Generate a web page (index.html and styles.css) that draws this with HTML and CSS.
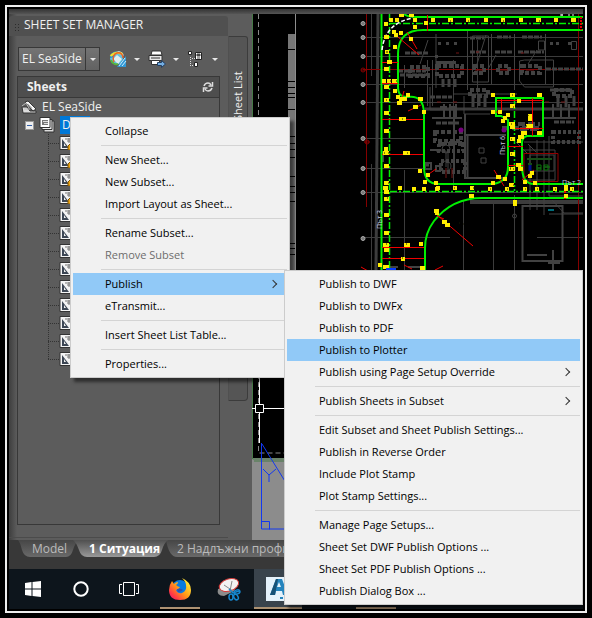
FILE: index.html
```html
<!DOCTYPE html>
<html lang="en">
<head>
<meta charset="utf-8">
<title>Sheet Set Manager</title>
<link rel="stylesheet" href="styles.css">
</head>
<body>
<svg class="defs" aria-hidden="true">
  <symbol id="sheet" viewBox="0 0 16 14">
    <path d="M1 .5h15v13H1z" fill="#f4f4f4" stroke="#333"/>
    <path d="M3 3l7 9H3z" fill="#3c4654"/><path d="M5 7l2 3H5z" fill="#f4f4f4"/>
    <path d="M6 3h10M10 2v5M8 5h8" stroke="#777" fill="none"/>
  </symbol>
  <symbol id="sheet-locked" viewBox="0 0 16 14">
    <use href="#sheet"/><path d="M9 14v-4l2-2h5v6z" fill="#f0a818" stroke="#7d5200"/>
  </symbol>
</svg>
<div class="frame">
  <main class="workspace">
    <section class="palette">
      <h1 class="palette-title">SHEET SET MANAGER</h1>
      <div class="palette-body">
        <div class="palette-main">
          <div class="toolbar">
            <button class="combo" type="button"><span class="combo-text">EL SeaSide</span><span class="combo-arrow"><i class="caret"></i></span></button>
            <button class="tool" type="button" aria-label="Publish to DWF">
              <svg width="18" height="18" viewBox="0 0 18 18"><circle cx="7.500" cy="8" r="6.500" fill="#5fbfe2"/><path d="M1 8q0-5 5-6.500L5 7z" fill="#1d8ed0"/><path d="M4 9l4-4 5 4-4 5z" fill="#dfeef0"/><path d="M8 1q6 0 7 5l-3-2z" fill="#bfe0ea"/><path d="M1.500 6q5-5 12-2" fill="none" stroke="#f0dc2c" stroke-width="2"/><path d="M5 12c-2-5 0-8 3-9 4-1 6 2 6 5" fill="none" stroke="#e96428" stroke-width="1.500"/><path d="M2 10c1 3 4 5 7 4" fill="none" stroke="#58b43c" stroke-width="2"/><path d="M17 6v11H8z" fill="#3197d4"/><path d="M16 8l-6 8M17 11l-4 5" stroke="#c9edff"/></svg><i class="caret"></i>
            </button>
            <button class="tool" type="button" aria-label="Publish">
              <svg width="18" height="18" viewBox="0 0 18 18"><path d="M4 1h9l1 4H3z" fill="#fff" stroke="#333"/><path d="M1 5.500h13v5H1z" fill="#e8e8e8" stroke="#333"/><path d="M3 8h9" stroke="#333"/><path d="M3.500 10.500h8v4h-8z" fill="#fff" stroke="#333"/><path d="M9.500 12.500h4v-2l4 3.500-4 3.500v-2h-4z" fill="#74aee2" stroke="#243f61"/></svg><i class="caret"></i>
            </button>
            <button class="tool" type="button" aria-label="Sheet selections">
              <svg width="18" height="18" viewBox="0 0 18 18"><path d="M1.500 1.500h3v3h-3zM8.500 2.500h6v7h-6zM7.500 12.500h3v4h-3z" fill="#fff" stroke="#222"/><path d="M10 4h3v2h-3zM10 8h3" fill="#444" stroke="#444"/><path d="M3.500 7v10M5 15.500h2M5 8.500h3" fill="none" stroke="#ddd" stroke-dasharray="1 1"/></svg><i class="caret"></i>
            </button>
          </div>
          <div class="tree-box">
            <h2 class="tree-head">Sheets
              <svg width="12" height="12" viewBox="0 0 12 12" fill="none" stroke="#ddd" stroke-width="1.500"><path d="M2 5q1-3 4-3 2 0 3 2M10.500 1v4h-4M10 7q-1 3-4 3-2 0-3-2M1.500 11V7h4"/></svg>
            </h2>
            <div class="tree-row root">
              <svg width="17" height="14" viewBox="0 0 17 14"><path d="M1 7h5l3 4h6v2H2z" fill="#ddd" stroke="#333"/><path d="M4 2l3-1 8 8-3 2z" fill="#f4f4f4" stroke="#333"/><path d="M1 6l4-3 3 5M3 9h6M7 4l4 4" fill="none" stroke="#bbb"/></svg>EL SeaSide
            </div>
            <div class="tree-row subset">
              <button class="expander" type="button" aria-label="Collapse"></button>
              <svg width="16" height="16" viewBox="0 0 16 16"><path d="M5 4h10v11H5z" fill="#ddd" stroke="#333"/><path d="M3 2.500h10v10H3z" fill="#eee" stroke="#333"/><path d="M1 .5h10v10H1z" fill="#fff" stroke="#333"/><path d="M3 3h6v5H3z" fill="#777"/><path d="M4 4.500h5M5 6.500h4" stroke="#ddd"/></svg>
              <span class="selected">D</span>
            </div>
            <ul class="sheets">
              <li><svg><use href="#sheet-locked"/></svg></li><li><svg><use href="#sheet-locked"/></svg></li><li><svg><use href="#sheet-locked"/></svg></li><li><svg><use href="#sheet-locked"/></svg></li>
              <li><svg><use href="#sheet"/></svg></li><li><svg><use href="#sheet"/></svg></li><li><svg><use href="#sheet"/></svg></li><li><svg><use href="#sheet"/></svg></li><li><svg><use href="#sheet"/></svg></li><li><svg><use href="#sheet"/></svg></li><li><svg><use href="#sheet"/></svg></li><li><svg><use href="#sheet"/></svg></li><li><svg><use href="#sheet"/></svg></li>
            </ul>
          </div>
        </div>
        <div class="side-tabs"><button class="side-tab" type="button">Sheet List</button></div>
      </div>
    </section>
    <div class="drawing">
      <svg class="cad" viewBox="252 14 331 526" preserveAspectRatio="xMinYMin slice" fill="none">
        <path d="M253 14h330v444H253z" fill="#000"/>
        <path d="M252.500 14v445H583M254 461h329" stroke="#477a47"/>
        <path d="M258.500 14v439H583" stroke="#888" stroke-dasharray="5 3"/>
        <path d="M259.500 378v65M252 408.500h32" stroke="#fff"/>
        <path d="M255.500 404.500h8v8h-8z" fill="#000" stroke="#fff"/>
        <g stroke="#1238f0"><path d="M261.500 443v86H300M261.500 521.500h8v8M262 444l34 55M263 469l6 6v7M269 475l7-6"/></g>
        <path d="M288 34h7v240h-7z" fill="#777"/>
        <path d="M295.500 14v260" stroke="#8e8e8e"/><path d="M289.500 125v150" stroke="#444"/>
        <path d="M288 49.500h7m-7 32h7m-7 6h7m-7 6h7m-7 4h7m-7 12h7m-7 27h7m-7 7h7m-7 6h7m-7 8h7m-7 19h7m-7 10h7m-7 6h7m-7 9h7m-7 42h7m-7 5h7m-7 6h7" stroke="#000"/>

        <!-- grid axes -->
        <g stroke="#3c3c3c">
          <path d="M363 37.500h220M363 56.500h220M363 84.500h220M363 102.500h220M363 138.500h60M363 168.500h60M363 192.500h220M363 237.500h87M537 237.500h46M371.500 14v62M371.500 164v106M404.500 170v100M463.500 200v70M493.500 200v70M453.500 60v130M477.500 40v70M514.500 195v75"/>
          <path d="M378 14l-2 256" stroke-width="3"/>
          <path d="M425 109h158" stroke-width="3"/><path d="M470 202h113" stroke-width="4"/>
        </g>
        <g fill="#777" stroke="#aaa"><circle cx="363" cy="23.500" r="2"/><circle cx="363" cy="37.500" r="2"/><circle cx="363" cy="56.500" r="2"/><circle cx="363" cy="84.500" r="2"/><circle cx="363" cy="102.500" r="2"/><circle cx="363" cy="138.500" r="2"/><circle cx="363" cy="168.500" r="2"/><circle cx="363" cy="192.500" r="2"/><circle cx="363" cy="238.500" r="2"/></g>
        <g stroke="#850000"><path d="M366.500 14v193M363 69.500h220M578.500 14v256M361 70h6M364 142h6"/><circle cx="363" cy="70" r="2"/><circle cx="367" cy="142" r="2"/></g>

        <!-- building plans -->
        <g stroke="#424242">
          <path d="M436 34v54M467.500 30v60M491.500 34v50M514.500 34v56M545.500 34v50M427.500 60v46M432.500 60v46M404.500 65v23M472.500 36v46h16V36zM571.500 41.500h5v8h-5zM519.500 61v20l5 6h29V60h-29zM538.500 41h6v9h-6zM496 55l-8 14M428 40l-8 24M486 35l-9 29M537 50l-9 14M430 87v23h25M453 94h64M464 96v18h26"/>
          <path d="M398 71h28M400 75h26M405 53h24M470 38h14M497 37h14M522 37h20M470 52h16M495 52h18M518 52h26M546 69h37M430 97h22M550 90h22M436 123h24M554 122h20M424 165h8" stroke-width="3" stroke-dasharray="5 1"/>
          <path d="M437 66h25v10h-25zM474 66h10v7h-10zM498 66h11v7h-11zM522 66h18v7h-18zM470 90h18v6h-18zM554 90h18v6h-18zM410 67h18v9h-18zM435 132h26v9h-26z" stroke-width="4" stroke-dasharray="4 2"/>
          <path d="M438 43.500h3m5 0h3m5 0h3m93 0h3m3 0h3m9 0h3m-136 13h3M436 62.500h20M443 79v8m6-8v8m6-8v8m18 9v11m6-11v10m6-10v11m73-11v11m8-11v11m8-11v10" stroke-width="3"/>
          <path d="M444 104v14m6-14v14m6-14v14m97-14v14m8-14v14m8-14v14m-137 0h30m80 0h34M454 110v60M465 114v64h38M468 178h34M466 135h40M467.500 135v43" stroke-width="2"/>
          <path d="M439 143h24v8h-24zM441 161h24v11h-24zM553 132h26v10h-26z" stroke-width="4" stroke-dasharray="3 2"/>
          <path d="M479 148h5v5h-5zM481 158h5v5h-5zM523 150h32v30h-32zM530 146v64M537 140v70M544 140v75M549 136v60h34M549 214h34M524 142h59M530 155h24v16h-24zM528 144l8 8M516 142l12 12M552 200l12 13h20M436 151h10v16M448 152v20" />
          <path d="M522.500 206v55h40v-55zM527 255h20M553 250v20M548 263h12" stroke-width="2"/>
          <path d="M438 144h26M440 108h16M502 128h40M518 124h22M520 129h20" stroke-width="4" stroke-dasharray="7 3"/>
          <path d="M425 163h6v6h-6zM436 166h4v5h-4zM430 150h10M383 151v11M408 267h12M384 267h14" stroke-width="2"/>
          <circle cx="514.500" cy="216" r="2"/><circle cx="446" cy="166" r="5"/><circle cx="446" cy="149" r="4"/>
        </g>
        <path d="M437 102h4m12 0h4m88 0h4m12 0h4M446 168v10m6-10v10m4-125h3m17-1h3m42 1h3M475 70h8m17 0h8m18 0h8" stroke="#751414"/>
        <path d="M524 153.500h34v28h-34z" stroke="#910000"/><path d="M527 159h25M528 164h4m5 4h4m3-1h6" stroke="#174c17" stroke-width="2"/><path d="M537 165h4v5h-4zM544 165h4v5h-4z" stroke="#087808"/><path d="M530 165v6" stroke="#001088" stroke-width="3"/>
        <circle cx="461" cy="130" r="2.500" fill="#75007d"/><circle cx="504" cy="130" r="2.500" fill="#75007d"/><path d="M548 210h6" stroke="#006b78" stroke-width="2"/>

        <!-- roads -->
        <g stroke="#00f000" stroke-width="2">
          <path d="M381.500 14v256M404 14q4 3 12 3H583M583 30H423q-25 0-25 24v33q0 11 10 10 16-2 16 17v53q0 17 15 17h54q15-2 15-17v-47l-7-4h-5V98h47v38h-16q-5 1-5 7v23q0 18 12 18h49M583 198H482q-30 0-48 23-9 12-9 27v22"/>
          <path d="M389.500 14v256M390 23.500h193M390 191.500h193M514.500 98v93" stroke-width="1.500" stroke-dasharray="7 2 2 2"/>
        </g>
        <path d="M382 50q3-27 31-32" stroke="#fff" stroke-width="1.500" stroke-dasharray="4 2"/>
        <g stroke="#f00000"><path d="M382 62.500h16M382 83.500h16M382 119.500h41M382 154.500h41M382 247.500h42M382 258.500h42M427.500 15v16M398 37l21 18M407 32l10 17M408 111l13-6M404 91l-2 7M437 215l36 31M494 170l10 16M426 176l10-7M437 216l7 3M532.500 98v38M497 100.500h46M501.500 99v13h-6M515 128.500h28M508 146.500h15M508 165.500h15M522 180l12-10M404 265l8 4M435 270l8-4M361 267l7 4"/></g>
        <path d="M581 17v13M565 185v14" stroke="#e50000" stroke-width="2" stroke-dasharray="2 1"/>

        <!-- dimension labels -->
        <path d="M384 24h4M389 20h4M395 20h4M399 15h5M409 15h5M413 20h4M413 27h4M424 23h4M431 20h4M384 37h5M392 32h4M394 35h4M399 33h4M409 39h4M393 47h4M385 52h4M387 62h5M384 69h5M382 81h4M387 81h4M392 81h5M384 87h5M393 91h4M396 97h4M399 99h4M403 99h4M406 95h4M418 99h5M397 103h5M413 107h5M422 112h4M384 100h5M384 113h5M399 119h7M384 131h5M384 149h4M383 153h6M403 153h7M384 166h5M418 171h4M426 175h4M423 182h4M434 183h4M384 183h5M383 188h5M384 192h5M398 188h4M412 189h4M422 189h4M435 189h4M384 199h5M384 215h5M384 233h5M383 245h6M404 245h6M419 244h4M384 250h5M401 259h4M434 211h5M378 265h4M383 267h6M420 268h5" stroke="#ffed00" stroke-width="4"/>
        <path d="M448 20h5M466 20h4M484 20h4M501 20h4M519 20h4M536 20h5M554 20h4M571 20h5M510 95h5M491 95h4M537 95h5M517 101h4M510 106h5M491 112h4M498 112h4M506 115h4M503 118h4M501 121h4M509 124h6M510 127h5M530 114v7M526 126h7M537 133h5M521 133h6M518 137h6M517 141h4M510 139h5M510 154h5M509 169h6M518 169h5M516 165h5M496 177h5M503 179h4M491 183h4M530 173h4M528 176h4M523 182h4M533 183h4M488 189h4M505 189h4M523 189h4M535 189h4M553 189h4M570 189h4M509 185h5M566 185v6M566 194v4M436 188h4M453 188h4M470 188h4M469 196h5M515 200v6M435 213h4M442 222h5M445 225h5" stroke="#ffed00" stroke-width="4"/>
        <path d="M386 52h2m2 29h1m5 0h1m-11 19h1m15 19h1m-19 34h1m3 0h1m18 0h1m-20 30h1m-2 15h1m-2 46h1m19 0h1m-5 14h1m-19-192h1M450 21h1m17 0h1m34 0h1m35 0h1m-28 74h1m0 12h1m14 8v1m-2 10h1m-16-2h1m-1 15h1m-1 15h1m-2 15h1m2 0h1m-1 16h1m-24 4h1m16 0h1m17 0h1m11 0h1m17 0h1m16 0h1m-119-1h1m18 0h1m-15 35h1m3 1h1m46-56h1m-8 4h1m-2-66h1" stroke="#171700"/>
        <path d="M386 269h10" stroke="#053cff" stroke-width="2"/>
        <g class="road-name"><text transform="translate(382 229) rotate(-90)">Път 3</text><text transform="translate(505 155) rotate(-90)">Път 6</text><text x="562" y="185">Път 2</text></g>
        <path d="M560 15h3m5 0h2m2 0h2m-12-1v2" stroke="#eee"/>
      </svg>
    </div>
  </main>
  <nav class="layout-tabs">
    <svg class="tab-shapes" height="18" viewBox="0 0 574 18" preserveAspectRatio="xMinYMin slice">
      <defs><linearGradient id="tab" x2="0" y2="1"><stop stop-color="#464646"/><stop offset="1" stop-color="#696969"/></linearGradient><linearGradient id="tab-on" x2="0" y2="1"><stop stop-color="#505050"/><stop offset="1" stop-color="#999"/></linearGradient></defs>
      <path d="M9 0H70Q66 3 64 10q-2 7-7 7H21q-6 0-8-7-2-8-4-10z" fill="url(#tab)"/>
      <path d="M157 0q3 17 11 17h406V0z" fill="url(#tab)"/>
      <path d="M64 0h95q-4 3-6 10-2 7-8 7H78q-6 0-8-7-3-8-6-10z" fill="url(#tab-on)"/>
    </svg>
    <a class="tab tab-model" href="#model">Model</a><a class="tab tab-active" href="#layout1">1 Ситуация</a><a class="tab" href="#layout2">2 Надлъжни профили</a>
  </nav>
  <footer class="taskbar">
    <button type="button" aria-label="Start"><svg width="16" height="16" viewBox="0 0 16 16" fill="#fff"><path d="M0 2l6.500-1v6.500H0zM7.500 1L16 0v7.500H7.500zM0 8.500h6.500V15L0 14zM7.500 8.500H16V16l-8.500-1z"/></svg></button>
    <button type="button" aria-label="Search"><svg width="16" height="16" viewBox="0 0 16 16"><circle cx="8" cy="8" r="6.700" fill="none" stroke="#fff" stroke-width="2"/></svg></button>
    <button type="button" aria-label="Task view"><svg width="20" height="16" viewBox="0 0 20 16" fill="none" stroke="#fff"><path d="M4.500 1.500h11v13h-11zM3 3.500H.5v9H3M17 3.500h2.500v9H17"/></svg></button>
    <button class="app running" type="button" aria-label="Firefox"><svg width="24" height="24" viewBox="0 0 24 24"><defs><linearGradient id="fox" x1="1" y1="0" x2="0" y2="1"><stop offset=".1" stop-color="#fff33c"/><stop offset=".5" stop-color="#ff9c16"/><stop offset=".8" stop-color="#ff3647"/><stop offset="1" stop-color="#e3107c"/></linearGradient></defs><circle cx="12" cy="11" r="8" fill="#087be0"/><path d="M4 4l2 3q2-2 4-2 0 2-2 3 2 2 4 2-1 2-4 3 2 4 6 3 5-2 4-8 0-3-4-7 9 4 9 12 0 10-11 10T1 13Q1 8 4 4z" fill="url(#fox)"/><path d="M9 12q4-1 6 1-2 2-5 2z" fill="#2b4fb0"/></svg></button>
    <button class="app" type="button" aria-label="Snipping Tool"><svg width="26" height="24" viewBox="0 0 26 24"><path d="M2 12Q0 19 8 19l10-5 4-8z" fill="#8c8c8c"/><ellipse cx="13" cy="8" rx="10" ry="6" transform="rotate(-18 13 8)" fill="#f2f2f2" stroke="#d33b39"/><path d="M16 4l-2 10M8 8l9 6" stroke="#888" fill="none"/><g fill="none" stroke="#1687cf" stroke-width="1.500"><path d="M13 12l4 4 6-2"/><ellipse cx="21" cy="15" rx="3" ry="2" transform="rotate(-20 21 15)"/><ellipse cx="15" cy="20" rx="2" ry="3"/><ellipse cx="20" cy="20" rx="2" ry="3" transform="rotate(-30 20 20)"/></g></svg></button>
    <button class="app running active" type="button" aria-label="AutoCAD"><svg width="24" height="24" viewBox="0 0 24 24"><path d="M0 0h24v24H0z" fill="#e4f1fa"/><path d="M4 18L10 2h6l6 16h-5l-1-4h-6l-1 4zM11 10h4l-2-5z" fill="#2584bd"/><path d="M4 18L10 2h2l-3 16z" fill="#165075"/><path d="M14 21h8" stroke="#2584bd" stroke-width="2" stroke-dasharray="3 1"/></svg></button>
    <button class="app" type="button" aria-label="Browser"></button>
    <button class="app running" type="button" aria-label="Editor"></button>
  </footer>

  <div class="menu context-menu" role="menu">
    <button type="button">Collapse</button><hr>
    <button type="button">New Sheet...</button><button type="button">New Subset...</button><button type="button">Import Layout as Sheet...</button><hr>
    <button type="button">Rename Subset...</button><button type="button" disabled>Remove Subset</button><hr>
    <button class="highlight more" type="button">Publish</button><button type="button">eTransmit...</button><hr>
    <button type="button">Insert Sheet List Table...</button><hr>
    <button type="button">Properties...</button>
  </div>
  <div class="menu submenu" role="menu">
    <button type="button">Publish to DWF</button><button type="button">Publish to DWFx</button><button type="button">Publish to PDF</button><button class="highlight" type="button">Publish to Plotter</button><button class="more" type="button">Publish using Page Setup Override</button><hr>
    <button class="more" type="button">Publish Sheets in Subset</button><hr>
    <button type="button">Edit Subset and Sheet Publish Settings...</button><button type="button">Publish in Reverse Order</button><button type="button">Include Plot Stamp</button><button type="button">Plot Stamp Settings...</button><hr>
    <button type="button">Manage Page Setups...</button><button type="button">Sheet Set DWF Publish Options ...</button><button type="button">Sheet Set PDF Publish Options ...</button><button type="button">Publish Dialog Box ...</button>
  </div>
</div>
</body>
</html>
```
FILE: styles.css
```css
* { box-sizing: border-box; }
body {
  margin: 0;
  padding: 5px;
  height: 100vh;
  min-height: 618px;
  background: #000;
  font: 11px/18px "Open Sans", "Noto Sans", sans-serif;
  color: #f0f0f0;
}
button { font: inherit; color: inherit; border: 0; padding: 0; background: none; }
h1, h2, ul { margin: 0; padding: 0; font: inherit; list-style: none; }
.defs { position: absolute; width: 0; height: 0; }

.frame {
  position: relative;
  display: flex;
  flex-direction: column;
  height: 100%;
  border: 2px solid #eee;
  padding: 2px;
  overflow: hidden;
}
.workspace {
  flex: 1;
  display: flex;
  min-height: 0;
  padding-top: 5px;
  background: linear-gradient(#333, #555 5px);
}

/* palette */
.palette {
  width: 243px;
  flex: none;
  display: flex;
  flex-direction: column;
  background: linear-gradient(90deg, #3e3e3e, #5c5c5c 8px);
  padding-top: 2px;
}
.palette-title {
  height: 20px;
  width: 219px;
  padding-left: 15px;
  border-radius: 3px 3px 0 0;
  font-size: 12px;
  background: repeating-linear-gradient(#505050 0 2px, transparent 2px 3px) 6px 6px / 4px 9px no-repeat, repeating-linear-gradient(90deg, #2c2c2c 0 1px, #505050 1px 3px) 6px 6px / 4px 9px no-repeat, #505050;
}
.palette-body { flex: 1; display: flex; padding-bottom: 2px; min-height: 0; }
.palette-main {
  flex: 1;
  min-width: 0;
  display: flex;
  flex-direction: column;
  padding: 11px 8px 12px;
  border-bottom: 1px solid #4b4b4b;
}
.toolbar { display: flex; align-items: center; gap: 8px; height: 24px; }
.combo {
  display: flex;
  width: 82px;
  height: 24px;
  margin: 0 1px;
  border: 1px solid #383838;
  background: linear-gradient(#747474, #626262);
  text-align: left;
}
.combo-text { flex: 1; padding-left: 3px; line-height: 22px; font-size: 12px; white-space: nowrap; }
.combo-arrow { width: 14px; display: grid; place-items: center; border-left: 1px solid #383838; }
.caret { border: 3px solid transparent; border-top-color: #e8e8e8; border-bottom: 0; }
.tool { display: flex; align-items: center; justify-content: space-between; width: 31px; }
.tree-box { flex: 1; margin-top: 5px; border: 1px solid #383838; background: #5c5c5c; }
.tree-head {
  display: flex;
  align-items: center;
  justify-content: space-between;
  height: 21px;
  padding: 0 5px 0 9px;
  border-bottom: 1px solid #383838;
  background: #4e4e4e;
  font-weight: 700;
  font-size: 12px;
}
.tree-row { display: flex; align-items: center; height: 18px; gap: 4px; }
.root { padding-left: 3px; font-size: 12px; }
.subset { padding-left: 7px; gap: 5px; }
.expander { width: 9px; height: 9px; border: 1px solid #999; background: linear-gradient(#335fa8, #335fa8) center / 5px 1px no-repeat, #eee; }
.selected { width: 30px; padding-left: 2px; background: #0078d7; font-size: 12px; }
.sheets { margin-left: 30px; }
.sheets li {
  display: flex;
  align-items: center;
  height: 18px;
  background:
    repeating-linear-gradient(#333 0 1px, transparent 1px 2px) 0 0 / 1px 100% no-repeat,
    repeating-linear-gradient(90deg, #333 0 1px, transparent 1px 2px) 0 9px / 11px 1px no-repeat;
}
.sheets li:last-child {
  background:
    repeating-linear-gradient(#333 0 1px, transparent 1px 2px) 0 0 / 1px 9px no-repeat,
    repeating-linear-gradient(90deg, #333 0 1px, transparent 1px 2px) 0 9px / 11px 1px no-repeat;
}
.sheets svg { width: 16px; height: 14px; margin-left: 11px; }
.side-tabs { flex: none; width: 24px; }
.side-tab {
  width: 20px;
  height: 365px;
  border: 1px solid #3c3c3c;
  border-right-color: #505050;
  border-radius: 4px 0 0 3px;
  background: #555;
  writing-mode: vertical-rl;
  transform: rotate(180deg);
  text-align: right;
  padding-bottom: 34px;
}

/* drawing */
.drawing { flex: 1; min-width: 0; overflow: hidden; background: #8c8c8c; }
.cad { display: block; width: 100%; height: 100%; }
.road-name { fill: #c8c8e0; font-size: 7px; }

/* layout tabs */
.layout-tabs { position: relative; display: flex; height: 29px; flex: none; background: #383838; overflow: hidden; }
.tab-shapes { position: absolute; width: 100%; height: 18px; }
.tab { position: relative; color: #bbb; text-decoration: none; font-size: 12px; white-space: nowrap; }
.tab-model { width: 80px; padding-left: 23px; }
.tab-active { width: 88px; color: #fff; font-weight: 700; }

/* taskbar */
.taskbar { display: flex; flex: none; height: 40px; background: #0d151c; }
.taskbar button { width: 48px; display: grid; place-items: center; }
.taskbar .app { margin-left: 3px; }
.taskbar .app + .app { margin-left: 1px; }
.running { background: linear-gradient(#ad9273, #ad9273) center bottom / 40px 2px no-repeat; }
.running.active { background: linear-gradient(#ad9273, #ad9273) center bottom / 48px 2px no-repeat, #39434c; }

/* menus */
.menu {
  position: absolute;
  display: flex;
  flex-direction: column;
  padding: 2px;
  border: 1px solid #ccc;
  background: #f1f1f1;
  color: #000;
  box-shadow: 4px 4px 3px rgba(0, 0, 0, .5);
}
.menu button { height: 22px; padding-left: 32px; text-align: left; line-height: 22px; white-space: nowrap; }
.menu button:disabled { color: #6d6d6d; }
.menu hr { width: auto; height: 1px; margin: 3px 0 3px 28px; border: 0; background: #d4d4d4; }
.menu .highlight { background: #91c9f7; }
.menu .more { display: flex; align-items: center; justify-content: space-between; padding-right: 11px; }
.more::after { content: ""; width: 5px; height: 5px; border: solid #333; border-width: 1px 1px 0 0; transform: rotate(45deg); }
.context-menu { left: 63px; top: 110px; width: 220px; }
.submenu { left: 277px; top: 263px; width: 299px; }
```
